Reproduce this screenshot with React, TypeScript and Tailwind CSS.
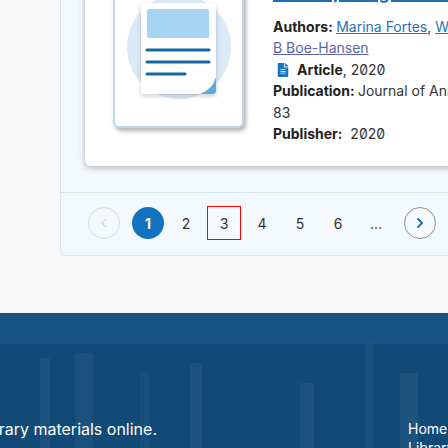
import { ChevronLeft, ChevronRight } from 'lucide-react'
import { FaFileAlt } from 'react-icons/fa'

function Illustration() {
  return (
    <svg width="104" height="104" viewBox="0 0 104 104" className="overflow-visible">
      <defs>
        <filter id="docShadow" x="-20%" y="-20%" width="140%" height="140%">
          <feDropShadow dx="0" dy="2" stdDeviation="2.5" floodColor="#000" floodOpacity="0.2" />
        </filter>
      </defs>
      <circle cx="52" cy="52" r="52" fill="#dce9f7" />
      <rect x="14" y="8" width="75" height="91" rx="3" fill="#fff" filter="url(#docShadow)" />
      <rect x="20" y="14" width="62" height="29" rx="2" fill="#a5d5f3" />
      <line x1="20" y1="55" x2="82" y2="55" stroke="#16679f" strokeWidth="3" strokeLinecap="round" />
      <line x1="20" y1="67" x2="82" y2="67" stroke="#16679f" strokeWidth="3" strokeLinecap="round" />
      <line x1="20" y1="79" x2="58" y2="79" stroke="#16679f" strokeWidth="3" strokeLinecap="round" />
      <path d="M89 82 L89 96 Q89 99 86 99 L73 99 Q86 94 89 82 Z" fill="#5aaadc" />
    </svg>
  )
}

const pages = ['2', '3', '4', '5', '6', '...']

export default function App() {
  return (
    <div className="relative h-[448px] w-[448px] overflow-hidden bg-[#f8f8f8] font-['Inter',sans-serif]">
      {/* panel with result card */}
      <div className="-mt-[90px] ml-[60px] w-[520px] rounded-b-md border border-t-0 border-[#d6e7f5] bg-[#f4f9fd] pt-[28px]">
        <div className="ml-[24px] flex gap-[29px] rounded-md bg-white pb-[22px] pl-[28px] pt-[28px] shadow-[0_2px_6px_rgba(0,0,0,0.28)]">
          <div className="flex h-[162px] w-[131px] shrink-0 items-center justify-center rounded-md border-2 border-[#bcd8f0] bg-white shadow-[2px_3px_4px_rgba(0,0,0,0.3)]">
            <Illustration />
          </div>
          <div className="pt-[15px] text-[14px] leading-[21.4px] text-[#333]">
            <a className="mb-[11px] block whitespace-nowrap text-[17px] font-bold leading-[24px] text-[#1f6fb8] underline decoration-2">
              2/2 Proposing a combined approach
            </a>
            <div className="whitespace-nowrap">
              <span className="font-bold text-[#222]">Authors: </span>
              <a className="text-[#2a6fb8] underline">Marina Fortes</a>,{' '}
              <a className="text-[#2a6fb8] underline">W Holland</a>,
            </div>
            <div>
              <a className="text-[#5865b0] underline">B Boe-Hansen</a>
            </div>
            <div className="flex items-center">
              <FaFileAlt className="ml-[3px] mr-[7px] text-[14px] text-[#1a73c0]" />
              <span className="font-bold text-[#222]">Article</span>
              <span className="slashed-zero">, 2020</span>
            </div>
            <div className="whitespace-nowrap">
              <span className="font-bold text-[#222]">Publication: </span>
              Journal of Animal Science
            </div>
            <div>83</div>
            <div>
              <span className="font-bold text-[#222]">Publisher:</span>
              <span className="slashed-zero">&nbsp; 2020</span>
            </div>
          </div>
        </div>

        {/* pagination */}
        <div className="mt-[26px] flex items-center border-t border-[#d6e4ef] pb-[16px] pl-[27px] pt-[14px] text-[14px] text-[#333]">
          <button className="flex h-[32px] w-[32px] items-center justify-center rounded-full border border-[#dcdcdc] text-[#c8c8c8]">
            <ChevronLeft size={16} strokeWidth={1.5} />
          </button>
          <div className="ml-[12px] flex gap-[6px]">
            <span className="flex h-[32px] w-[32px] items-center justify-center rounded-full bg-[#1272c0] font-bold text-white">
              1
            </span>
            {pages.map((p) => (
              <span
                key={p}
                className={
                  p === '3'
                    ? 'flex h-[32px] w-[32px] items-center justify-center outline outline-1 outline-[#ff0000]'
                    : 'flex h-[32px] w-[32px] items-center justify-center'
                }
              >
                {p}
              </span>
            ))}
          </div>
          <button className="ml-[12px] flex h-[32px] w-[32px] items-center justify-center rounded-full border border-[#8f8f8f] text-[#1a72c0]">
            <ChevronRight size={16} strokeWidth={3} />
          </button>
        </div>
      </div>

      {/* footer banner */}
      <div className="relative mt-[57px] h-[200px] overflow-hidden bg-[#124a77]">
        <div className="absolute inset-x-0 top-0 h-[31px] bg-[#1a5587] opacity-70" />
        <div className="absolute left-[40px] top-[45px] h-[160px] w-[10px] bg-white/[0.04]" />
        <div className="absolute left-[75px] top-[40px] h-[160px] w-[18px] bg-white/[0.04]" />
        <div className="absolute left-[140px] top-[60px] h-[160px] w-[10px] bg-white/[0.03]" />
        <div className="absolute left-[190px] top-[50px] h-[160px] w-[12px] bg-white/[0.04]" />
        <div className="absolute left-[300px] top-[70px] h-[160px] w-[14px] bg-white/[0.04]" />
        <div className="absolute left-[365px] top-[30px] h-[160px] w-[8px] bg-white/[0.04]" />
        <div className="absolute left-[400px] top-[60px] h-[160px] w-[18px] bg-white/[0.05]" />
        <div className="relative flex pt-[104px] text-[16px] leading-[24px] text-white">
          <div className="flex w-[157px] justify-end">
            <p className="shrink-0 whitespace-nowrap">Explore our library materials online.</p>
          </div>
          <ul className="ml-[251px] text-[14px] leading-[19px]">
            <li className="pt-[2px]">Home</li>
            <li>Library</li>
          </ul>
        </div>
      </div>
    </div>
  )
}
